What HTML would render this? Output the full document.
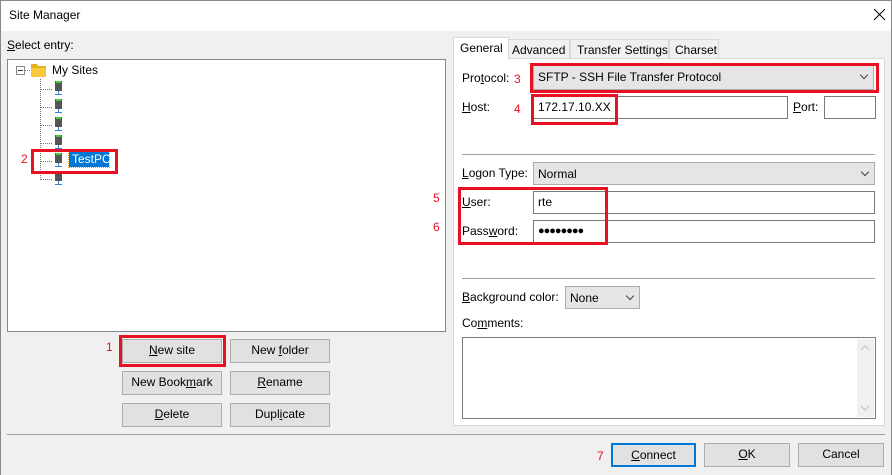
<!DOCTYPE html><html><head><style>
*{box-sizing:border-box;margin:0;padding:0}
body{width:892px;height:475px;background:#f0f0f0;font:12px "Liberation Sans",sans-serif;color:#000;position:relative;overflow:hidden}
.a{position:absolute}
.t{position:absolute;white-space:nowrap;line-height:14px}
.btn{position:absolute;background:#e1e1e1;border:1px solid #adadad;text-align:center;line-height:21px}
.box{position:absolute;background:#fff;border:1px solid #7a7a7a;padding-left:4px;line-height:20px}
.cb{position:absolute;background:#e5e5e5;border:1px solid #adadad;padding-left:4px;line-height:22px}
.cb:after{content:"";position:absolute;right:6px;top:6px;width:5px;height:5px;border-right:1px solid #444;border-bottom:1px solid #444;transform:rotate(45deg)}
.red{position:absolute;border:3px solid #e81123}
.rn{position:absolute;color:#e81123;font-size:12px}
u{text-decoration:underline}
</style></head><body>
<div class="a" style="left:0;top:0;width:892px;height:31px;background:#fff;border:1px solid #888;border-bottom:none"></div>
<div class="t" style="left:9px;top:8px;font-size:12px">Site Manager</div>
<svg class="a" style="left:874px;top:9px" width="11" height="11"><path d="M0 0L11 11M11 0L0 11" stroke="#000" stroke-width="1"/></svg>
<div class="t" style="left:7px;top:38px"><u>S</u>elect entry:</div>
<div class="a" style="left:7px;top:59px;width:439px;height:273px;background:#fff;border:1px solid #828790"></div>
<svg class="a" style="left:0;top:0" width="450" height="200">
<rect x="16.5" y="66.5" width="8" height="8" fill="#fff" stroke="#888"/><path d="M18 70.5h5" stroke="#333"/>
<path d="M25 70.5h6" stroke="#888" stroke-dasharray="1 1"/>
<path d="M31 64h6l1 2h8v11h-15z" fill="#e8b020"/><path d="M31 68h15v9h-15z" fill="#f8c93a"/>
<path d="M40.5 79v101" stroke="#777" stroke-dasharray="1 1"/>
<g stroke="#777" stroke-dasharray="1 1">
<path d="M41 89.5h12M41 107.5h12M41 125.5h12M41 143.5h12M41 161.5h12M41 179.5h12"/></g>
<g id="s">
<rect x="55" y="81" width="7" height="10" fill="#555"/><rect x="56" y="81" width="5" height="2" fill="#4c4"/><path d="M58.5 91v3M55 94.5h7" stroke="#3a7bd5"/></g>
<use href="#s" y="18"/><use href="#s" y="36"/><use href="#s" y="54"/><use href="#s" y="72"/><use href="#s" y="90"/>
</svg>
<div class="t" style="left:52px;top:63px">My Sites</div>
<div class="a" style="left:69px;top:151px;width:40px;height:16px;background:#0078d7;outline:1px dotted #f90"></div>
<div class="t" style="left:72px;top:152px;color:#fff">TestPC</div>
<div class="red" style="left:31px;top:149px;width:87px;height:25px"></div>
<div class="rn" style="left:21px;top:152px">2</div>

<div class="btn" style="left:122px;top:339px;width:100px;height:24px"><u>N</u>ew site</div>
<div class="red" style="left:119px;top:335px;width:107px;height:32px"></div>
<div class="rn" style="left:106px;top:340px">1</div>
<div class="btn" style="left:230px;top:339px;width:100px;height:24px">New <u>f</u>older</div>
<div class="btn" style="left:122px;top:371px;width:100px;height:24px">New Book<u>m</u>ark</div>
<div class="btn" style="left:230px;top:371px;width:100px;height:24px"><u>R</u>ename</div>
<div class="btn" style="left:122px;top:403px;width:100px;height:24px"><u>D</u>elete</div>
<div class="btn" style="left:230px;top:403px;width:100px;height:24px">Dupl<u>i</u>cate</div>
<div class="a" style="left:7px;top:434px;width:878px;height:1px;background:#a0a0a0"></div>

<div class="a" style="left:453px;top:58px;width:432px;height:368px;background:#fff;border:1px solid #d9d9d9"></div>
<div class="a" style="left:508px;top:39px;width:62px;height:20px;background:#f0f0f0;border:1px solid #d9d9d9"></div>
<div class="a" style="left:570px;top:39px;width:99px;height:20px;background:#f0f0f0;border:1px solid #d9d9d9"></div>
<div class="a" style="left:669px;top:39px;width:50px;height:20px;background:#f0f0f0;border:1px solid #d9d9d9"></div>
<div class="a" style="left:453px;top:37px;width:56px;height:23px;background:#fff;border:1px solid #d9d9d9;border-bottom:none"></div>
<div class="t" style="left:460px;top:41px">General</div>
<div class="t" style="left:512px;top:43px">Advanced</div>
<div class="t" style="left:577px;top:43px">Transfer Settings</div>
<div class="t" style="left:675px;top:43px">Charset</div>

<div class="t" style="left:462px;top:71px">Pro<u>t</u>ocol:</div>
<div class="rn" style="left:514px;top:72px">3</div>
<div class="cb" style="left:533px;top:65px;width:341px;height:25px">SFTP - SSH File Transfer Protocol</div>
<div class="red" style="left:530px;top:63px;width:349px;height:30px"></div>
<div class="t" style="left:462px;top:100px"><u>H</u>ost:</div>
<div class="rn" style="left:514px;top:102px">4</div>
<div class="box" style="left:533px;top:96px;width:255px;height:23px">172.17.10.XX</div>
<div class="red" style="left:531px;top:94px;width:87px;height:31px"></div>
<div class="t" style="left:793px;top:100px"><u>P</u>ort:</div>
<div class="box" style="left:824px;top:96px;width:52px;height:23px"></div>
<div class="a" style="left:462px;top:154px;width:413px;height:1px;background:#a0a0a0"></div>
<div class="t" style="left:462px;top:166px"><u>L</u>ogon Type:</div>
<div class="cb" style="left:533px;top:162px;width:342px;height:23px">Normal</div>
<div class="t" style="left:462px;top:195px"><u>U</u>ser:</div>
<div class="box" style="left:533px;top:191px;width:342px;height:23px">rte</div>
<div class="t" style="left:462px;top:224px">Pass<u>w</u>ord:</div>
<div class="box" style="left:533px;top:220px;width:342px;height:23px;font-size:11px;letter-spacing:-1px">●●●●●●●●</div>
<div class="red" style="left:458px;top:187px;width:150px;height:58px"></div>
<div class="rn" style="left:433px;top:191px">5</div>
<div class="rn" style="left:433px;top:220px">6</div>
<div class="a" style="left:462px;top:278px;width:413px;height:1px;background:#a0a0a0"></div>
<div class="t" style="left:462px;top:290px"><u>B</u>ackground color:</div>
<div class="cb" style="left:565px;top:286px;width:75px;height:23px">None</div>
<div class="t" style="left:462px;top:316px">Co<u>m</u>ments:</div>
<div class="a" style="left:462px;top:337px;width:414px;height:82px;background:#fff;border:1px solid #7a7a7a"></div>
<div class="a" style="left:857px;top:339px;width:17px;height:78px;background:#f0f0f0"></div>
<svg class="a" style="left:860px;top:344px" width="10" height="70"><path d="M1 6l4-4 4 4M1 62l4 4 4-4" fill="none" stroke="#c0c0c0"/></svg>

<div class="btn" style="left:611px;top:443px;width:85px;height:24px;border:2px solid #0078d7;line-height:20px"><u>C</u>onnect</div>
<div class="rn" style="left:597px;top:449px">7</div>
<div class="btn" style="left:704px;top:443px;width:86px;height:24px"><u>O</u>K</div>
<div class="btn" style="left:798px;top:443px;width:86px;height:24px">Cancel</div>
<div class="a" style="left:0;top:31px;width:1px;height:444px;background:#888"></div>
<div class="a" style="left:891px;top:31px;width:1px;height:444px;background:#888"></div>
</body></html>
